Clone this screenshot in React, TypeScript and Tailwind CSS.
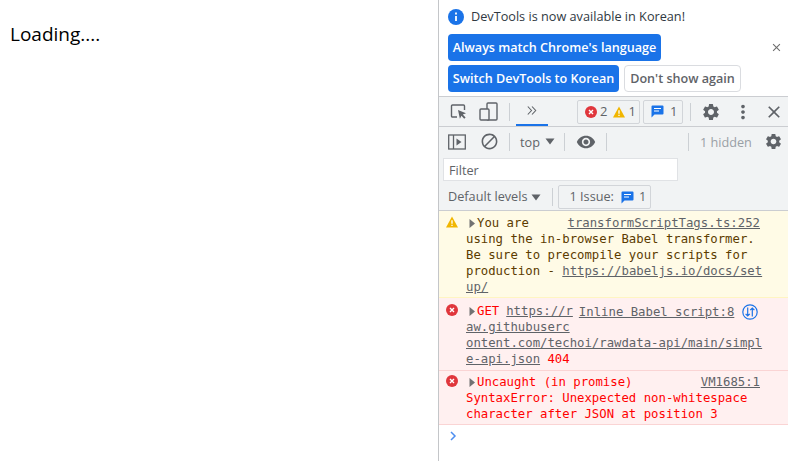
import { MdBlock, MdClose, MdMoreVert, MdSettings, MdVisibility } from "react-icons/md";

const UI_FONT = "font-['Open_Sans','Noto_Sans',sans-serif]";

function ErrorIcon({ size = 12 }: { size?: number }) {
  return (
    <svg width={size} height={size} viewBox="0 0 12 12" className="shrink-0">
      <circle cx="6" cy="6" r="6" fill="#e0363c" />
      <path d="M4 4l4 4M8 4l-4 4" stroke="#fff" strokeWidth="1.4" />
    </svg>
  );
}

function WarnIcon({ size = 12 }: { size?: number }) {
  return (
    <svg width={size} height={size} viewBox="0 0 12 12" className="shrink-0">
      <path d="M6 0.5L12 11.5H0Z" fill="#f1b600" />
      <path d="M6 4.2v3.6M6 8.8v1.3" stroke="#fff" strokeWidth="1.3" />
    </svg>
  );
}

function MessageIcon() {
  return (
    <svg width="13" height="13" viewBox="0 0 13 13" className="shrink-0">
      <path d="M1.5 0.5h10a1 1 0 011 1v7a1 1 0 01-1 1H3.5L0.5 12.5v-11a1 1 0 011-1z" fill="#1a73e8" />
      <path d="M3 3.5h7M3 6h5" stroke="#fff" strokeWidth="1.2" />
    </svg>
  );
}

function Caret() {
  return (
    <svg width="10" height="7" viewBox="0 0 10 7" className="shrink-0">
      <path d="M0.5 0.5h9L5 6.5z" fill="#5f6368" />
    </svg>
  );
}

function Expander() {
  return (
    <svg width="6" height="9" viewBox="0 0 6 9" className="shrink-0">
      <path d="M0.5 0v9L6 4.5z" fill="#727272" />
    </svg>
  );
}

function Divider({ className }: { className: string }) {
  return <div className={`w-px h-[18px] bg-[#ccd0d4] shrink-0 ${className}`} />;
}

function Badge({ children, className }: { children: React.ReactNode; className: string }) {
  return (
    <div className={`h-[24px] border border-[#d2d5d9] rounded-[2px] flex items-center text-[13px] text-[#5f6368] shrink-0 ${className}`}>
      {children}
    </div>
  );
}

function Infobar() {
  return (
    <div className="h-[97px] border-b border-[#cbcdd1] pl-[9px] pt-[8px] relative">
      <div className="flex items-center gap-[7px] h-[18px]">
        <svg width="16" height="16" viewBox="0 0 16 16">
          <circle cx="8" cy="8" r="8" fill="#1a73e8" />
          <path d="M8 7v5M8 3.6v1.8" stroke="#fff" strokeWidth="1.8" />
        </svg>
        <span className="text-[12.7px] text-[#303942]">DevTools is now available in Korean!</span>
      </div>
      <div className="mt-[8px] h-[27px] w-[213px] pt-[2px] bg-[#1a73e8] rounded-[4px] flex items-center justify-center text-[12.6px] font-semibold text-white whitespace-nowrap">
        Always match Chrome's language
      </div>
      <div className="mt-[4px] flex gap-[5px]">
        <div className="h-[27px] w-[171px] pt-[2px] bg-[#1a73e8] rounded-[4px] flex items-center justify-center text-[12.6px] font-semibold text-white whitespace-nowrap">
          Switch DevTools to Korean
        </div>
        <div className="h-[27px] w-[117px] pt-[2px] bg-white border border-[#dadce0] rounded-[4px] flex items-center justify-center text-[12.6px] font-semibold text-[#5f6368] whitespace-nowrap">
          Don't show again
        </div>
      </div>
      <MdClose className="absolute right-[5px] top-[41px] text-[#6e6e6e]" size={13} />
    </div>
  );
}

function MainToolbar() {
  return (
    <div className="h-[30px] bg-[#f1f3f4] border-b border-[#cbcdd1] flex items-center relative">
      <svg width="18" height="18" viewBox="0 0 18 18" className="ml-[11px] shrink-0" fill="none">
        <path d="M7 14H2.5A1 1 0 011.5 13V3a1 1 0 011-1h11a1 1 0 011 1v4" stroke="#5f6368" strokeWidth="1.4" />
        <path d="M8 7l8 3.2-3.2 1.3 2.8 3-1.4 1.3-2.7-3-1.6 2.9z" fill="#5f6368" />
      </svg>
      <svg width="19" height="20" viewBox="0 0 19 20" className="ml-[11px] shrink-0" fill="none">
        <rect x="8" y="1" width="10" height="17" rx="1" stroke="#5f6368" strokeWidth="1.4" />
        <rect x="1" y="7" width="9" height="11" rx="1" fill="#f1f3f4" stroke="#5f6368" strokeWidth="1.4" />
      </svg>
      <Divider className="ml-[11px]" />
      <div className="w-[32px] ml-[6px] h-[29px] flex items-center justify-center border-b-2 border-[#1a73e8] self-start">
        <svg width="10" height="9" viewBox="0 0 10 9" fill="none" stroke="#5f6368" strokeWidth="1.1">
          <path d="M0.8 0.5L4.5 4.5 0.8 8.5M5 0.5L8.7 4.5 5 8.5" />
        </svg>
      </div>
      <Badge className="ml-[29px] w-[63px] pl-[7px]">
        <ErrorIcon />
        <span className="ml-[3px]">2</span>
        <span className="ml-[6px]"><WarnIcon /></span>
        <span className="ml-[3px]">1</span>
      </Badge>
      <Badge className="ml-[3px] w-[40px] pl-[7px]">
        <MessageIcon />
        <span className="ml-[6px]">1</span>
      </Badge>
      <Divider className="ml-[7px]" />
      <MdSettings className="ml-[10px] text-[#5f6368] shrink-0" size={20} />
      <MdMoreVert className="ml-[11px] text-[#5f6368] shrink-0" size={22} />
      <MdClose className="ml-[10px] text-[#5f6368] shrink-0" size={20} />
    </div>
  );
}

function ConsoleToolbar() {
  return (
    <div className="h-[29px] bg-[#f1f3f4] flex items-center text-[12.7px] text-[#5f6368]">
      <svg width="18" height="16" viewBox="0 0 18 16" className="ml-[9px] shrink-0" fill="none">
        <rect x="0.7" y="1" width="16.6" height="14" stroke="#5f6368" strokeWidth="1.3" />
        <path d="M5.5 1v14" stroke="#5f6368" strokeWidth="1.3" />
        <path d="M8.5 4.5v7l5-3.5z" fill="#5f6368" />
      </svg>
      <MdBlock className="ml-[14px] shrink-0" size={19} />
      <Divider className="ml-[10px]" />
      <span className="ml-[10px] mt-[3px]">top</span>
      <span className="ml-[5px]"><Caret /></span>
      <Divider className="ml-[9px]" />
      <MdVisibility className="ml-[11px] shrink-0" size={20} />
      <Divider className="ml-[10px]" />
      <Divider className="ml-[81px]" />
      <span className="ml-[11px] mt-[3px] text-[#9aa0a6] whitespace-nowrap">1 hidden</span>
      <MdSettings className="ml-[12px] shrink-0" size={19} />
    </div>
  );
}

function FilterRow() {
  return (
    <div className="h-[28px] bg-[#f1f3f4] pl-[4px] pt-[2px]">
      <div className="h-[23px] w-[235px] bg-white border border-[#e0e2e5] flex items-center pl-[5px] pt-[2px] text-[12.7px] text-[#5f6368]">
        Filter
      </div>
    </div>
  );
}

function LevelsRow() {
  return (
    <div className="h-[27px] bg-[#f1f3f4] border-b border-[#cbcdd1] flex items-center pl-[9px] text-[12.7px] text-[#5f6368]">
      <span className="whitespace-nowrap">Default levels</span>
      <span className="ml-[3px]"><Caret /></span>
      <Divider className="ml-[11px]" />
      <div className="ml-[5px] h-[24px] w-[93px] border border-[#d2d5d9] rounded-[2px] flex items-center pl-[11px]">
        <span className="whitespace-nowrap">1 Issue:</span>
        <span className="ml-[7px]"><MessageIcon /></span>
        <span className="ml-[5px]">1</span>
      </div>
    </div>
  );
}

function ConsoleMessages() {
  return (
    <div className="font-['DejaVu_Sans_Mono',monospace] text-[12.3px] leading-[16px]">
      <div className="h-[87px] bg-[#fffbe6] border-b border-[#fff5c2] relative pl-[27px] pt-[4px] text-[#5c3c00] whitespace-pre">
        <span className="absolute left-[7px] top-[5px]"><WarnIcon /></span>
        <div className="flex items-center justify-between pr-[28px]">
          <span className="flex items-center gap-[2px]"><span className="ml-[3px]"><Expander /></span>You are</span>
          <span className="underline text-[#5f6368]">transformScriptTags.ts:252</span>
        </div>
        <div>using the in-browser Babel transformer.</div>
        <div>Be sure to precompile your scripts for</div>
        <div>production - <span className="underline text-[#5f6368]">https://babeljs.io/docs/set</span></div>
        <div className="underline text-[#5f6368]">up/</div>
      </div>
      <div className="h-[73px] bg-[#fff0f0] border-b border-[#fad4d4] relative pl-[27px] pt-[5px] text-[#f00] whitespace-pre">
        <span className="absolute left-[7px] top-[6px]"><ErrorIcon /></span>
        <div className="flex items-center h-[16px]">
          <span className="ml-[3px]"><Expander /></span>
          <span className="ml-[2px]">GET</span>
          <span className="ml-[7px] underline text-[#5f6368]">https://r</span>
          <span className="ml-[6px] mt-[2px] underline text-[#5f6368]">Inline Babel script:8</span>
          <svg width="16" height="16" viewBox="0 0 16 16" className="ml-[8px] mt-[2px] shrink-0" fill="none" stroke="#1a73e8" strokeWidth="1.2">
            <circle cx="8" cy="8" r="7.2" />
            <path d="M5.7 3.5v8.5M3.6 9.8l2.1 2.2 2.1-2.2M10.3 12.5V4M8.2 6.2l2.1-2.2 2.1 2.2" />
          </svg>
        </div>
        <div className="underline text-[#5f6368]">aw.githubuserc</div>
        <div className="underline text-[#5f6368]">ontent.com/techoi/rawdata-api/main/simpl</div>
        <div><span className="underline text-[#5f6368]">e-api.json</span> 404</div>
      </div>
      <div className="h-[54px] bg-[#fff0f0] border-b border-[#fad4d4] relative pl-[27px] pt-[3px] text-[#f00] whitespace-pre">
        <span className="absolute left-[7px] top-[4px]"><ErrorIcon /></span>
        <div className="flex items-center justify-between pr-[28px]">
          <span className="flex items-center gap-[2px]"><span className="ml-[3px]"><Expander /></span>Uncaught (in promise)</span>
          <span className="underline text-[#5f6368]">VM1685:1</span>
        </div>
        <div>SyntaxError: Unexpected non-whitespace</div>
        <div>character after JSON at position 3</div>
      </div>
      <div className="pl-[11px] pt-[6px]">
        <svg width="7" height="10" viewBox="0 0 7 10" fill="none" stroke="#4d8ef0" strokeWidth="1.5">
          <path d="M1 1l4 4-4 4" />
        </svg>
      </div>
    </div>
  );
}

export default function App() {
  return (
    <div className={`flex w-[788px] h-[461px] bg-white overflow-hidden ${UI_FONT}`}>
      <div className="w-[438px] shrink-0 pl-[10px] pt-[22px] text-[19px] leading-[24px] text-black">
        Loading....
      </div>
      <div className="flex-1 min-w-0 border-l border-[#c4c6c9] relative">
        <Infobar />
        <MainToolbar />
        <ConsoleToolbar />
        <FilterRow />
        <LevelsRow />
        <ConsoleMessages />
      </div>
    </div>
  );
}
